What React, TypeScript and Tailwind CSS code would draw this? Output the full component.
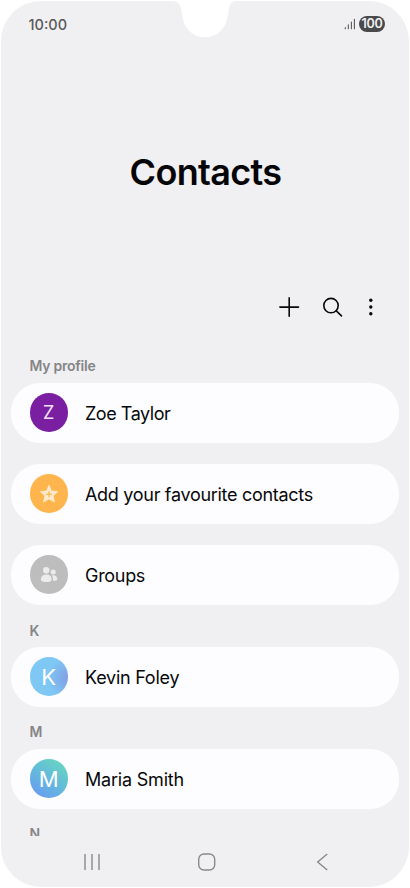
import { FC, ReactNode } from "react";

interface ContactRow {
  name: string;
  tracking: string;
  avatar: ReactNode;
  avatarClass: string;
}

const StarIcon: FC = () => (
  <svg width="20" height="20" viewBox="0 0 20 20" fill="none">
    <path
      d="M10 1.3L12.5 7L18.8 7.6L14.1 11.7L15.5 18L10 14.9L4.5 18L5.9 11.7L1.2 7.6L7.5 7Z"
      fill="#ffebcb"
      stroke="#ffebcb"
      strokeWidth="0.8"
      strokeLinejoin="round"
    />
    <path d="M10 7.2V13.2M7 10.2H13" stroke="#ffb54d" strokeWidth="1.2" />
  </svg>
);

const GroupIcon: FC = () => (
  <svg width="20" height="20" viewBox="0 0 20 20" fill="#ececec">
    <circle cx="7.2" cy="5.2" r="3.2" />
    <circle cx="14.2" cy="6.9" r="2.5" />
    <path d="M1.9 14.4C1.9 11.2 4.2 9.5 7.3 9.5S12.6 11.2 12.6 14.4C12.6 16.3 10.4 17 7.2 17S1.9 16.3 1.9 14.4Z" />
    <path d="M12.7 10.4C16 9.7 18.3 11.4 18.3 13.9C18.3 15.2 16.9 15.8 14 15.8C14.3 13.5 13.9 11.7 12.7 10.4Z" />
  </svg>
);

const profile: ContactRow = {
  name: "Zoe Taylor",
  tracking: "tracking-[-0.45px]",
  avatar: <span className="text-[18px]">Z</span>,
  avatarClass: "bg-[#7b1fa2] text-[#f3e3f8]",
};

const favourites: ContactRow = {
  name: "Add your favourite contacts",
  tracking: "tracking-[-0.3px]",
  avatar: <StarIcon />,
  avatarClass: "bg-[#ffb54d]",
};

const groups: ContactRow = {
  name: "Groups",
  tracking: "tracking-[-0.3px]",
  avatar: <GroupIcon />,
  avatarClass: "bg-[#bdbdbd]",
};

const kevin: ContactRow = {
  name: "Kevin Foley",
  tracking: "tracking-[-0.25px]",
  avatar: <span className="pt-px text-[22px]">K</span>,
  avatarClass: "bg-[radial-gradient(circle_at_100%_55%,#829ee2_0%,#7fb1ec_22%,#7fc8f4_48%)] text-white",
};

const maria: ContactRow = {
  name: "Maria Smith",
  tracking: "tracking-[-0.2px]",
  avatar: <span className="text-[22px]">M</span>,
  avatarClass: "bg-[linear-gradient(35deg,#68a0ee_15%,#63b9dc_48%,#67cfc6_80%)] text-white",
};

const Row: FC<{ row: ContactRow }> = ({ row }) => (
  <div className="ml-[10px] mr-[10px] flex h-[60px] shrink-0 items-center rounded-[29px] bg-[#fdfdff] pl-[18.5px]">
    <div className={`-mt-px flex size-[38.5px] shrink-0 items-center justify-center rounded-full ${row.avatarClass}`}>
      {row.avatar}
    </div>
    <span className={`ml-[17px] whitespace-nowrap pt-px text-[18px] leading-6 text-[#08080a] ${row.tracking}`}>
      {row.name}
    </span>
  </div>
);

const Notch: FC = () => (
  <svg className="absolute left-[170px] top-0" width="70" height="38" viewBox="0 0 70 38" fill="#fff">
    <path d="M0 0V1H2C8 1 10.5 4 11.5 11C13 28 22 37.3 35 37.3S57 28 58.5 11C59.3 4 61.5 1 67.5 1H70V0Z" />
  </svg>
);

const Signal: FC = () => (
  <svg width="12" height="12" viewBox="0 0 12 12" stroke="#58585a" strokeWidth="1.1" strokeLinecap="round">
    <path d="M1.3 9.5V10.8M4.3 6.8V10.8M7.4 4V10.8M10.4 1.2V10.8" />
  </svg>
);

export default function App() {
  return (
    <div className="relative h-[888px] w-[410px] overflow-hidden bg-white p-px font-['Inter',sans-serif]">
      <div className="flex h-[886px] w-[408px] flex-col overflow-hidden rounded-[40px] bg-[#f0f0f2]">
        <header className="flex h-[46px] shrink-0 items-center justify-between pl-[27.5px] pr-[24px]">
          <span className="pt-px text-[14.5px] font-medium text-[#58585a]">10:00</span>
          <div className="flex items-center gap-[3px]">
            <Signal />
            <span className="flex h-4 w-[26px] items-center justify-center rounded-full bg-[#4a4a4c] pt-px text-[12.5px] font-semibold tracking-[-0.2px] text-[#f2f2f4]">
              100
            </span>
          </div>
        </header>

        <div className="flex h-[250px] shrink-0 items-center justify-center">
          <h1 className="pl-px text-[36px] font-semibold tracking-[-0.65px] text-[#050507]">Contacts</h1>
        </div>

        <div className="flex h-[24px] shrink-0 justify-end pr-[24px] text-black">
          <svg width="108" height="24" viewBox="0 0 108 24" fill="none" stroke="#09090b" strokeWidth="1.6" strokeLinecap="round">
            <path d="M12.2 0.9V19.3M2.9 10.1H21.5" />
            <circle cx="54" cy="8.6" r="7.2" />
            <path d="M59.3 13.9L64.5 18.9" />
            <g fill="#09090b" stroke="none">
              <circle cx="93.8" cy="3.3" r="1.7" />
              <circle cx="93.8" cy="10" r="1.7" />
              <circle cx="93.8" cy="16.7" r="1.7" />
            </g>
          </svg>
        </div>

        <main className="flex h-[515px] shrink-0 flex-col overflow-hidden text-[14px] font-semibold leading-[18px] text-[#858587]">
          <div className="h-[62px] shrink-0 pl-[28.5px] pt-[36px] tracking-[-0.25px]">My profile</div>
          <div className="flex shrink-0 flex-col gap-[21px] font-normal">
            <Row row={profile} />
            <Row row={favourites} />
            <Row row={groups} />
          </div>
          <div className="h-[42px] shrink-0 pl-[28.5px] pt-[17px]">K</div>
          <div className="font-normal">
            <Row row={kevin} />
          </div>
          <div className="h-[42px] shrink-0 pl-[28.5px] pt-[16px]">M</div>
          <div className="font-normal">
            <Row row={maria} />
          </div>
          <div className="shrink-0 pl-[28.5px] pt-[16px]">N</div>
        </main>

        <nav className="flex h-[51px] shrink-0 items-center justify-between pl-[82px] pr-[80.5px]">
          <svg width="18" height="20" viewBox="0 0 18 20" stroke="#89898b" strokeWidth="1.4">
            <path d="M2 2V18M9 2V18M16 2V18" />
          </svg>
          <svg className="-ml-px" width="20" height="20" viewBox="0 0 20 20" fill="none" stroke="#89898b" strokeWidth="1.4">
            <rect x="1.7" y="2" width="16" height="16" rx="5.3" />
          </svg>
          <svg width="14" height="20" viewBox="0 0 14 20" fill="none" stroke="#89898b" strokeWidth="1.4">
            <path d="M12.2 2L2.7 10L12.2 18" />
          </svg>
        </nav>
      </div>
      <Notch />
    </div>
  );
}
